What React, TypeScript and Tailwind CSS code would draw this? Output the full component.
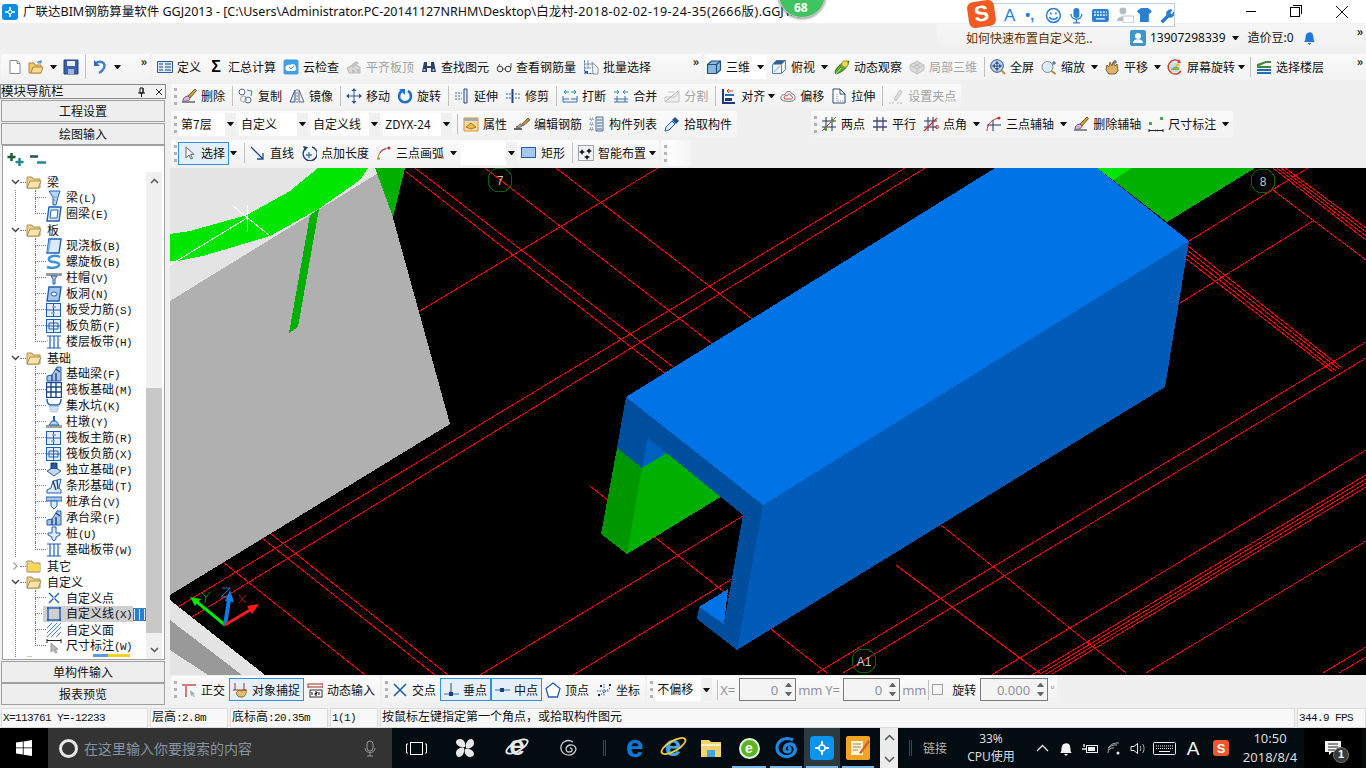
import React from 'react';
import clsx from 'clsx';

const Ic = ({ children, w = 16, h = 16 }: { children: React.ReactNode; w?: number; h?: number }) => (
  <svg width={w} height={h} viewBox={`0 0 ${w} ${h}`} className="shrink-0 block" fill="none">
    {children}
  </svg>
);

const B = '#1f5fb4';
const L = '#bcd6f5';

const icons: Record<string, React.ReactNode> = {
  new: <Ic><path d="M3 1.5h7l3 3v10H3z" fill="#fff" stroke="#8a8a8a" /><path d="M10 1.5v3h3" stroke="#8a8a8a" fill="#e6e6e6" /></Ic>,
  open: <Ic><path d="M1 4h5l1 2h6v8H1z" fill="#f0c868" stroke="#b08a3a" /><path d="M3 14l2-6h10l-2 6z" fill="#f7dc96" stroke="#b08a3a" /><path d="M9 4c1-2 3-2 4-1M13 1v3h-3" stroke="#3f7fc0" /></Ic>,
  save: <Ic><path d="M1 1h14v14H1z" fill="#3d5fa8" stroke="#26407c" /><path d="M4 2h8v5H4z" fill="#e8eef8" /><path d="M5 10h6v5H5z" fill="#9fb6dc" /></Ic>,
  undo: <Ic><path d="M4 4c5-3 10 0 8 5-1 2-3 4-5 5" stroke="#3a7fd0" strokeWidth="2.4" /><path d="M2 1v6h6z" fill="#2a6cc0" /></Ic>,
  define: <Ic><path d="M.5 2.5h15v11H.5z" fill="#dbe8f8" stroke="#2c5a9c" /><path d="M2 5h4M2 8h4M2 11h4M8 5h6M8 8h6M8 11h6" stroke="#24466f" /></Ic>,
  sum: <span className="w-4 text-center font-bold text-[16px] leading-4 text-black font-['Liberation_Sans',sans-serif]">Σ</span>,
  cloud: <Ic><rect x=".5" y=".5" width="15" height="15" rx="2" fill="#3fa0e4" /><path d="M3 11c-2-3 1-6 4-5 2-2 6-1 6 3 1 2-1 3-2 3H4z" fill="#fff" /><path d="M6 8l2 2 3-3" stroke="#2a80c8" /></Ic>,
  flush: <Ic><path d="M1 9l7-4 6 3v6H3z" fill="#d8d8d8" stroke="#bbb" /><path d="M4 7l6-5 3 2-6 5zM6 11h3v3H6zM11 10h2v4h-2z" fill="#bfbfbf" /></Ic>,
  find: <Ic><path d="M3 3h3v4h4V3h3l2 10H10V9H6v4H1z" fill="#2d3f63" /><path d="M2.500 11h2M11.500 11h2" stroke="#9fc0e8" strokeWidth="2" /></Ic>,
  glass: <Ic><circle cx="4" cy="10" r="2.800" stroke="#333" /><circle cx="12" cy="10" r="2.800" stroke="#333" /><path d="M7 10h2M1 9l3-4M15 9V4" stroke="#555" /></Ic>,
  batch: <Ic><path d="M1.500 1.500v13h9" stroke={B} strokeDasharray="2 1" /><path d="M1 5h10M1 9h7M5 1v8M9 3l6 6v6h-5z" stroke="#8896a8" /><path d="M2 12h3v2H2z" fill={B} /></Ic>,
  cube: <Ic><path d="M1.500 5.500l4-3.500h9v9l-4 3.500h-9z" fill="#8bb9e4" stroke="#1f4f7f" strokeWidth="1.200" /><path d="M1.500 5.500h9v9M10.500 5.500l4-3.500" stroke="#1f4f7f" strokeWidth="1.200" /></Ic>,
  top: <Ic><path d="M1.500 5.500l4-4h9v9l-4 4h-9z" fill="#eef5fb" stroke="#5a85ad" /><path d="M1.500 5.500l4-4h9l-4 4z" fill="#2f6394" /><path d="M10.500 5.500v9" stroke="#5a85ad" /><path d="M3 13l6-6" stroke="#b9d2e8" strokeWidth="2" /></Ic>,
  orbit: <Ic><path d="M1 13C3 7 9 2 15 2c-1 6-6 11-13 13z" fill="#5ba62f" stroke="#35761a" /><circle cx="11" cy="5" r="3.200" fill="#f0dc50" stroke="#a89624" /><path d="M2 15l5-6" stroke="#bde29a" /></Ic>,
  local: <Ic><path d="M1 6l7-4 7 4v5l-7 4-7-4z" fill="#dcdcdc" stroke="#c0c0c0" /><path d="M1 6l7 4 7-4M8 10v5M4.500 4l7 4M11.500 4l-7 4" stroke="#bdbdbd" /></Ic>,
  full: <Ic><circle cx="7" cy="7" r="6.300" fill="#bcd3ee" stroke="#27528a" /><path d="M7 3v8M3 7h8M7 2.500l-1.500 2h3zM7 11.500l-1.500-2h3zM2.500 7l2-1.500v3zM11.500 7l-2-1.500v3z" stroke="#1d3f72" strokeWidth=".8" /><path d="M11 11l4 4" stroke="#c09030" strokeWidth="2" /></Ic>,
  zoom: <Ic><circle cx="6.500" cy="8" r="5.500" fill="#dbe8f5" stroke="#7c8ba0" /><path d="M10.500 12l4 3" stroke="#b88a30" strokeWidth="2" /><path d="M13 2v4M11 4h4" stroke="#33507e" /><path d="M3.500 7c0-2 2-3 3-3" stroke="#fff" /></Ic>,
  pan: <Ic><path d="M2 11l1-5 2 2 1-5 2 4 1-4 2 4 2-2 1 7-3 3H5z" fill="#d9b06c" stroke="#86622a" /><path d="M11 1v4M9 3h4" stroke="#33507e" /></Ic>,
  rotate: <Ic><rect x="3" y="4" width="10" height="9" fill="#c4e0f2" /><path d="M4 11h8v-2l-3-2-5 3z" fill="#7bb840" /><path d="M9 5h3v2H9z" fill="#f0c040" /><path d="M14 12A7 7 0 1 1 12.500 2.500" stroke="#d4402c" strokeWidth="1.500" /><path d="M12 0l2 4-4 0z" fill="#d4402c" /></Ic>,
  floors: <Ic><path d="M1 5l9-3h5v2H10L3 7h12v2H1z" fill="#3e8a3e" /><path d="M1 10h14v2H1zM1 13h14v2H1z" fill="#1f6fb4" /></Ic>,
  erase: <Ic><path d="M1 14h13" stroke="#222" /><path d="M2 13c0-3 2-5 5-5l2 2c0 2-3 4-7 3z" fill="#d9b2d8" stroke="#7a5a96" /><path d="M7 8l7-7 1.500 1.500-6.500 7.500z" fill="#c9a040" stroke="#7c5c16" /></Ic>,
  copy: <Ic><circle cx="4" cy="4" r="3" stroke="#5a6a80" /><circle cx="10" cy="12" r="3" stroke="#5a6a80" /><circle cx="5.500" cy="11" r="3" stroke="#9aa8b8" /><path d="M9 2l5 1-1 5" stroke="#3f7fc0" /></Ic>,
  mirror: <Ic><path d="M6 2L1 14h5z" stroke="#2a5a96" fill="#dbe8f8" /><path d="M10 2l5 12h-5z" stroke="#5a6a80" fill="#eef2f7" /><path d="M8 1v14" stroke="#777" strokeDasharray="2 1" /></Ic>,
  move: <Ic><path d="M8 1v14M1 8h14" stroke="#2a5a96" /><path d="M8 0l-2.500 3h5zM8 16l-2.500-3h5zM0 8l3-2.500v5zM16 8l-3-2.500v5z" fill="#2a5a96" /></Ic>,
  turn: <Ic><path d="M11 3a6 6 0 1 1-6 0" stroke="#1f6fc8" strokeWidth="2.600" /><path d="M2 1h6v6z" fill="#1f6fc8" /></Ic>,
  extend: <Ic><path d="M1 5h7M1 8h6M1 11h7" stroke="#3a6fb0" strokeDasharray="2 1" /><path d="M10 1h3v14h-3z" stroke="#22467c" fill="#e6eef8" /></Ic>,
  trim: <Ic><path d="M1 6h6M1 10h6M10 6h5M10 10h5" stroke="#3a6fb0" strokeDasharray="2 1" /><path d="M7.500 1v14" stroke="#22467c" strokeWidth="2" /></Ic>,
  breakline: <Ic><path d="M1 11h6M9 11h6M1 14h14M1 8v6M15 8v6" stroke="#3a6fb0" /><path d="M2 4h5M14 4H9M2 4l2-2M2 4l2 2M14 4l-2-2M14 4l-2 2" stroke="#2d84c8" /></Ic>,
  merge: <Ic><path d="M1 11h14M1 14h14M4 8v6M12 8v6" stroke="#3a6fb0" /><path d="M1 4h5M15 4h-5M6 4L4 2M6 4L4 6M10 4l2-2M10 4l2 2" stroke="#2d84c8" /></Ic>,
  split: <Ic><path d="M1 9h10l4-5v10H1z" stroke="#c4c4c4" fill="#eee" /><path d="M2 13L14 3" stroke="#aaa" /><path d="M4 4h6" stroke="#ccc" /></Ic>,
  align: <Ic><path d="M2 1v14h12" stroke="#1c3a78" strokeWidth="2" /><path d="M4 6h9v2H4z" fill="#2b6cb4" /><path d="M6 3h6M6 3l2-2M6 3l2 2" stroke="#c0392b" /><path d="M4 10h7v3H4z" fill="#1c3a78" /></Ic>,
  offset: <Ic><path d="M1 11c-1-3 2-5 4-4 0-4 6-5 7-1 3 0 4 4 2 6-1 2-11 2-13-1z" fill="#eef2f7" stroke="#6d7c90" /><path d="M4 10c0-2 2-3 3-2 1-3 4-2 4 0 2 0 2 3 0 3H5z" stroke="#d44a3a" /></Ic>,
  stretch: <Ic><path d="M2 1h7l5 5v9H2z" fill="#fff" stroke="#2a4a7c" /><path d="M9 1v5h5" stroke="#2a4a7c" /><path d="M6 6v7h6" stroke="#888" strokeDasharray="1 1" /></Ic>,
  grip: <Ic><path d="M1 15h5M9 15h5" stroke="#bbb" strokeDasharray="2 1" /><path d="M6 11l6-9 2 2-6 9z" fill="#ddd" stroke="#c0c0c0" /></Ic>,
  props: <Ic><path d="M1 2h14v13H1z" fill="#f8dca8" stroke="#e09030" /><path d="M1 2h14v3H1z" fill="#a8a8a8" /><path d="M3 11l5-4 5 4-5 2z" fill="#e8b848" stroke="#a87820" /></Ic>,
  edit: <Ic><path d="M0 13h8" stroke="#222" strokeWidth="1.400" /><path d="M2 11c2 0 3-3 5-3l1 2c-1 1-3 2-6 1z" fill="#c8a0b8" stroke="#665" /><path d="M8 8l6-6 2 2-7 6z" fill="#c88a3c" stroke="#764" /></Ic>,
  list: <Ic><path d="M7 1h7v14H7z" fill="#e4ecf6" stroke="#4a6a94" /><path d="M8 4h5M8 7h5M8 10h5M8 13h5" stroke="#4a6a94" /><path d="M1 2h3v2H1zM1 7h3v2H1zM1 12h3v2H1z" stroke="#4a6a94" strokeDasharray="1 1" /></Ic>,
  pick: <Ic><path d="M1 15l1-4 6-6 3 3-6 6z" fill="#dcecfa" stroke="#1f5fb4" /><path d="M8 4l3-3 4 4-3 3z" fill="#1c4f94" /></Ic>,
  two: <Ic><path d="M1 5h14M1 11h14M5 1v14M11 1v14" stroke="#20355f" /><path d="M1 15L15 1" stroke="#d4282c" /><rect x="3" y="11" width="3" height="3" fill="#4a9a30" /><rect x="10" y="3" width="3" height="3" fill="#4a9a30" /></Ic>,
  par: <Ic><path d="M1 5h14M1 11h14M5 1v14M11 1v14" stroke="#48497c" strokeWidth="1.300" /></Ic>,
  ang: <Ic><path d="M1 5h13M1 11h13M5 1v14M10 1v14" stroke="#20355f" /><path d="M1 15L14 2" stroke="#d4282c" strokeWidth="1.300" /><circle cx="14" cy="11" r="1.500" stroke="#d4282c" /></Ic>,
  arcaxis: <Ic><path d="M1 9h14M7 4v11" stroke="#20355f" /><path d="M1 15c0-8 6-12 12-13" stroke="#d4282c" /><circle cx="13" cy="2" r="1.500" fill="#d4282c" /></Ic>,
  dim: <Ic><path d="M1 13v3M15 13v3M1 14.500h14" stroke="#222" /><rect x="1" y="6" width="3" height="3" fill="#4aaa50" /><rect x="12" y="1" width="3" height="3" fill="#4aaa50" /><path d="M6 14.500l2-1v2zM11 14.500l-2-1v2z" fill="#222" /></Ic>,
  cursor: <Ic><path d="M5 2v11l3-3 2 4 1.500-.7-2-4h3.500z" fill="#fff" stroke="#666" /></Ic>,
  line: <Ic><path d="M1 2l12 12M13 8v6H7" stroke="#1f4f86" strokeWidth="1.300" /></Ic>,
  plus: <Ic><path d="M4 4a7 7 0 1 0 7-2" stroke="#20456f" strokeWidth="1.400" /><path d="M2 1l5 1-3 4z" fill="#20456f" /><path d="M8 7v6M5 10h6" stroke="#2a7ac0" strokeWidth="1.300" /></Ic>,
  arc: <Ic><path d="M2 14c0-6 5-11 11-11" stroke="#5a88b8" /><path d="M4 8c1-2 3-4 6-4" stroke="#c83a30" strokeWidth="1.200" /><circle cx="2.500" cy="13.500" r="1.500" fill="#e09020" /><circle cx="13" cy="3" r="1.500" fill="#d4282c" /></Ic>,
  rect: <Ic><rect x=".5" y="2.500" width="14" height="10" fill="#a8c6f0" stroke="#1f5fb4" /></Ic>,
  smart: <Ic><rect x=".5" y=".5" width="15" height="15" fill="#eef2f7" stroke="#555" strokeDasharray="1 1" /><path d="M4 4l1 2 2 1-2 1-1 2-1-2-2-1 2-1zM11 3l1 2 2 1-2 1-1 2-1-2-2-1 2-1zM9 10l1 1 2 1-2 1-1 2-1-2-2-1 2-1z" fill="#111" /></Ic>,
  ortho: <Ic><path d="M1 2h14v2H1zM4 4v11h2V4z" fill="#d47a7a" /><path d="M9 8l5 4-2 .5 2 2-1 .5-2-2-1 1z" fill="#9ab" /></Ic>,
  snap: <Ic><path d="M3 1v7M12 1v7M1 8h14" stroke="#a03020" /><path d="M5 13c-2-2 1-6 4-4l5-1c1 3-1 7-4 7-2 0-4 0-5-2z" fill="#e0c070" stroke="#8a6a20" /></Ic>,
  dyn: <Ic><path d="M1 2h15M1 5h15M1 2v4M16 2v4" stroke="#a03020" /><rect x="3" y="8" width="12" height="7" fill="#fff" stroke="#333" /><path d="M5 10v3M8 10h2v1.500H8V13h2M12 10v3" stroke="#111" /></Ic>,
  cross: <Ic><path d="M2 2l12 12M14 2L2 14" stroke="#1f5fb4" strokeWidth="1.600" /></Ic>,
  perp: <Ic><path d="M1 12h15" stroke="#2a6fc0" /><path d="M8 1v11" stroke="#444" /><rect x="6" y="10" width="4" height="4" fill="#1c3f8c" /></Ic>,
  mid: <Ic><path d="M1 8h15" stroke="#6a90c0" strokeWidth="1.400" /><rect x="6" y="6" width="4" height="4" fill="#1c3f8c" /></Ic>,
  vertex: <Ic><path d="M8 1l7 5.500-2.500 8.500h-9L1 6.500z" fill="#fff" stroke="#1f5fb4" strokeWidth="1.300" /></Ic>,
  coord: <Ic><path d="M3 14l11-8M8 2v12M1 9h12" stroke="#1f5fb4" strokeDasharray="1.500 1" /><path d="M4 4h2M13 3h2M2 13h2" stroke="#222" strokeWidth="2" /></Ic>,
};

const tree: Record<string, React.ReactNode> = {
  beam: <Ic><path d="M3 1h11l-2 6-2 8H7V7z" fill={L} stroke={B} /><path d="M7 7l5 0M4 3l5 8" stroke="#6a9ad8" /></Ic>,
  ring: <Ic><path d="M3 1h12l-2 14H1z" fill="#dceafa" stroke={B} strokeWidth="1.400" /><path d="M5 4h7l-1 8H4z" fill="#fff" stroke={B} /></Ic>,
  slab: <Ic><path d="M3 1h12l-2 14H1z" fill="#dceafa" stroke={B} strokeWidth="1.400" /><path d="M2 14l2-12" stroke="#7fb0e8" strokeWidth="2" /></Ic>,
  spiral: <Ic><path d="M14 3C8 0 2 3 3 6s9 1 10 4-6 5-12 3" stroke="#3f8fe0" strokeWidth="2.400" /></Ic>,
  cap: <Ic><path d="M0 3h16v3H0z" fill="#9a9a9a" /><path d="M5 6h6l-2 3v5H7V9z" fill={L} stroke={B} /></Ic>,
  hole: <Ic><path d="M3 1h12l-2 14H1z" fill="#a8c8f0" stroke={B} strokeWidth="1.400" /><ellipse cx="8" cy="8" rx="3" ry="2" fill="#fff" stroke={B} /></Ic>,
  force: <Ic><rect x=".5" y="1.500" width="14" height="13" fill="#e4eefa" stroke={B} /><path d="M7.500 2v12M1 8h13" stroke={B} /><path d="M6 5h4M5 11h4" stroke="#7fa8dc" strokeWidth="1.500" /></Ic>,
  neg: <Ic><rect x=".5" y="1.500" width="14" height="13" fill="#e4eefa" stroke={B} /><path d="M7.500 2v12M1 8h13M3 5h9v6H3z" stroke={B} /></Ic>,
  band: <Ic><path d="M1 2h14M1 14h14M4 2v12M8 2v12M12 2v12" stroke={B} strokeWidth="1.200" /><path d="M1 6h14" stroke="#88aad8" strokeDasharray="1 1" /></Ic>,
  fbeam: <Ic><path d="M1 15V10l5-1 5-8h4v14z" fill="#a8c4e8" stroke={B} /><path d="M6 9v6M10 3l4 3M10 15V7" stroke="#1c4580" strokeWidth="1.400" /></Ic>,
  raft: <Ic><rect x=".5" y=".5" width="15" height="15" fill="#fff" stroke="#1c4580" strokeWidth="1.400" /><path d="M1 5h14M1 10h14M5 1v14M10 1v14" stroke="#1c4580" strokeWidth="1.400" /></Ic>,
  sump: <Ic><path d="M1 1c0 4 2 6 4 6h6c2 0 4-2 4-6" stroke={B} strokeWidth="1.400" /><path d="M3 8h10l-2 6H5z" fill="#cfdeef" stroke="#7fa8dc" strokeDasharray="1 1" /></Ic>,
  pier: <Ic><path d="M0 11h16v3H0z" fill="#a0a0a0" /><path d="M3 11l3-4h4l3 4z" fill={L} stroke={B} /><path d="M7 2h2v5H7z" fill={B} /></Ic>,
  iso: <Ic><path d="M1 9l7-4 7 4-7 5z" fill="#c4d8f0" stroke={B} /><path d="M5 7V1h6v6" fill="#2a5a96" stroke="#163a70" /></Ic>,
  strip: <Ic><path d="M1 15v-3l4-2 2-7 8-2-2 9 2 2v3z" fill="#dceafa" stroke={B} /><path d="M7 3l3 9M11 2l1 9" stroke="#1c4580" strokeWidth="1.400" /></Ic>,
  cap2: <Ic><path d="M0 3h16v4H0z" fill="#a8c4e8" stroke={B} /><path d="M5 7h6v5l-3 3-3-3z" fill="#dceafa" stroke={B} /></Ic>,
  pile: <Ic><path d="M6 1h4v6h4v2l-4 2v2l-2 2-2-2v-2L2 9V7h4z" fill="#dceafa" stroke={B} /></Ic>,
  point: <Ic><path d="M3 3l10 10M13 3L3 13" stroke={B} strokeWidth="1.400" /><circle cx="8" cy="8" r="1.500" fill="#8ab4e8" /></Ic>,
  cline: <Ic><rect x="2" y="2" width="12" height="12" stroke={B} strokeWidth="1.400" /><path d="M1 1h2v2H1zM13 1h2v2h-2zM1 13h2v2H1zM13 13h2v2h-2z" fill={B} /></Ic>,
  face: <Ic><path d="M1 6l5-5M1 11L11 1M1 15L15 1M5 15L15 5M10 15l5-5" stroke="#4a86d0" /></Ic>,
  dimt: <Ic><path d="M1 1v4M15 1v4M1 2.500h14" stroke="#222" /><path d="M5 5v9l2.500-2 2 3 1.500-.8-2-3h3z" fill="#b8b8b8" stroke="#999" /></Ic>,
};

const Caret = ({ className }: { className?: string }) => (
  <span className={clsx('w-[7px] h-1 shrink-0 block border-t-4 border-x-[3.500px] border-x-transparent border-t-[#111]', className)} />
);

const Chevrons = ({ className }: { className?: string }) => (
  <span className={clsx('font-bold text-[12px] leading-3 text-[#111] self-start', className)}>»</span>
);

const Sep = ({ className }: { className?: string }) => (
  <span className={clsx('w-px h-[20px] bg-[#c0c0c0] shrink-0 mr-[-2px]', className)} />
);

const Gripper = () => <span className="w-[3px] h-[17px] mr-[-3px] shrink-0 border-l-[3px] border-dotted border-[#b4b4b4]" />;

type ToolProps = { icon: string; label: string; gray?: boolean; caret?: boolean; tight?: boolean; className?: string };

const Tool = ({ icon, label, gray, caret, tight, className }: ToolProps) => (
  <div className={clsx('flex items-center shrink-0', gray && 'text-[#a3a3a3]', className)}>
    {icons[icon]}
    <span className="ml-1 whitespace-nowrap">{label}</span>
    {caret && <Caret className="ml-[6px] mr-[-1px]" />}
    {tight && <Caret className="ml-[3px] mr-[-2px]" />}
  </div>
);

const ActiveTool = ({ icon, label, className }: { icon: string; label: string; className?: string }) => (
  <div className={clsx('flex items-center h-[23px] pl-[2px] pr-[3px] border border-[#2f8fe0] bg-[#e4eff9] shrink-0', className)}>
    {icons[icon]}
    <span className="ml-1 whitespace-nowrap">{label}</span>
  </div>
);

const Bar = ({ children, className }: { children: React.ReactNode; className?: string }) => (
  <div className={clsx('flex items-center gap-[7px] rounded-[2px] bg-linear-to-b from-[#fbfbfb] to-[#f2f2f2]', className)}>{children}</div>
);

const Combo = ({ label, className }: { label?: string; className?: string }) => (
  <div className={clsx('flex h-[23px] bg-white shrink-0', className)}>
    <span className="flex-1 pl-[2px] leading-[22px] whitespace-nowrap">{label}</span>
    <span className="w-[11px] bg-[#f0f0f0] flex items-center justify-center">
      <Caret />
    </span>
  </div>
);

const Spin = ({ value, className }: { value: string; className?: string }) => (
  <div className={clsx('flex h-[23px] border border-[#7a7a7a] bg-[#f4f4f4] items-center shrink-0', className)}>
    <span className="flex-1 text-right text-[#8d939b] text-[13px] pr-[3px] font-['Noto_Sans',sans-serif]">{value}</span>
    <span className="w-[14px] h-full flex flex-col items-center justify-center gap-[5px]">
      <span className="w-[7px] h-1 border-b-4 border-x-[3.500px] border-x-transparent border-b-[#666]" />
      <span className="w-[7px] h-1 border-t-4 border-x-[3.500px] border-x-transparent border-t-[#666]" />
    </span>
  </div>
);

const TitleBar = () => (
  <div className="relative h-[23px] bg-white flex items-center shrink-0">
    <div className="ml-[2px] w-4 h-4 rounded-[3px] bg-[#0c8ee6] flex items-center justify-center">
      <svg width="12" height="12" viewBox="0 0 12 12" fill="none">
        <path d="M6 1v10M1 6h10" stroke="#fff" strokeWidth="1.600" />
        <circle cx="6" cy="6" r="2" fill="#0c8ee6" stroke="#fff" />
      </svg>
    </div>
    <span className="ml-[5px] whitespace-nowrap text-[12.500px] text-[#111] font-['Noto_Sans','Noto_Sans_CJK_SC',sans-serif]">
      广联达BIM钢筋算量软件 GGJ2013 - [C:\Users\Administrator.PC-20141127NRHM\Desktop\白龙村
      <span className="tracking-[.45px]">-2018-02-02-19-24-35(2666版)</span>.GGJ12]
    </span>
    <div className="absolute left-[778px] top-[-30px] w-[48px] h-[48px] rounded-full bg-[#3fc45f] border border-[#c8c8c8] shadow-[0_1px_3px_rgba(0,0,0,.45)]" />
    <span className="absolute left-[794px] top-0 text-white text-[12px] font-bold leading-[15px] font-['Noto_Sans',sans-serif]">68</span>
    <div className="absolute left-[990px] top-[3px] w-[185px] h-[24px] bg-white border border-[#b9cfe2] z-10 flex items-center text-[#2a7fd0]">
      <span className="ml-[13px] font-['Liberation_Sans',sans-serif] text-[17px] leading-none">A</span>
      <span className="ml-[10px] font-bold text-[14px] leading-none font-['Liberation_Sans',sans-serif]">•,</span>
      <svg className="ml-[11px]" width="17" height="17" viewBox="0 0 17 17" fill="none">
        <circle cx="8.500" cy="8.500" r="7" stroke="#2a7fd0" strokeWidth="1.600" />
        <path d="M6 5.500v2M11 5.500v2" stroke="#2a7fd0" strokeWidth="1.600" />
        <path d="M4.500 10c1 3 7 3 8 0" stroke="#2a7fd0" strokeWidth="1.500" />
      </svg>
      <svg className="ml-[7px]" width="15" height="17" viewBox="0 0 15 17" fill="none">
        <rect x="4.500" y="1" width="6" height="10" rx="3" fill="#2a7fd0" />
        <path d="M2 7c0 7 11 7 11 0M7.500 12v4M4 16h7" stroke="#2a7fd0" strokeWidth="1.400" />
      </svg>
      <svg className="ml-[8px]" width="17" height="13" viewBox="0 0 17 13">
        <rect width="17" height="13" rx="2" fill="#2a7fd0" />
        <path d="M2 3h2M5 3h2M8 3h2M11 3h2M14 3h1M2 6h2M5 6h2M8 6h2M11 6h2M14 6h1M4 10h9" stroke="#fff" strokeWidth="1.300" />
      </svg>
      <svg className="ml-[8px]" width="18" height="16" viewBox="0 0 18 16">
        <circle cx="6" cy="4" r="3.500" fill="#b4bcc6" />
        <path d="M0 14c0-6 12-6 12 0z" fill="#b4bcc6" />
        <rect x="6" y="9" width="11" height="7" rx="1" fill="#fff" stroke="#b4bcc6" />
      </svg>
      <svg className="ml-[3px]" width="15" height="14" viewBox="0 0 15 14">
        <path d="M4 0h7l4 3-2 3-1-1v9H3V5L2 6 0 3z" fill="#2a7fd0" />
      </svg>
      <svg className="ml-[7px]" width="15" height="15" viewBox="0 0 15 15" fill="none">
        <path d="M2 13l6-6c-1-3 1-6 5-5l-2 3 2 2 2-3c1 4-2 6-5 5l-6 6z" fill="#2a7fd0" stroke="#2a7fd0" />
      </svg>
    </div>
    <div className="absolute left-[968px] top-[1px] w-[27px] h-[26px] z-20 rounded-[6px] bg-[#f25a24] rotate-[-8deg] flex items-center justify-center text-white font-bold text-[22px] leading-none font-['Liberation_Sans',sans-serif]">
      S
    </div>
    <div className="ml-auto flex items-center">
      <span className="w-[10px] h-px bg-black" />
      <span className="ml-[34px] w-[10px] h-[10px] border border-black relative">
        <span className="absolute left-[2px] top-[-3px] w-[9px] h-[9px] border-t border-r border-black" />
      </span>
      <svg className="ml-[35px] mr-[17px]" width="14" height="14" viewBox="0 0 14 14">
        <path d="M1 1l12 12M13 1L1 13" stroke="#111" />
      </svg>
    </div>
  </div>
);

const InfoRow = () => (
  <div className="h-[31px] flex justify-end shrink-0">
    <div className="w-[429px] h-[27px] mt-[1px] rounded-tl-[3px] bg-linear-to-b from-[#f6f6f6] to-[#f0f0f0] flex items-center">
      <span className="ml-[29px] w-[164px] text-[#5c3200]">如何快速布置自定义范..</span>
      <svg width="16" height="16" viewBox="0 0 16 16">
        <rect width="16" height="16" rx="2" fill="#3d95c9" />
        <circle cx="8" cy="6" r="3" fill="#fff" />
        <path d="M3 13c0-5 10-5 10 0z" fill="#fff" />
      </svg>
      <span className="ml-1 font-['Noto_Sans',sans-serif] whitespace-nowrap">13907298339</span>
      <Caret className="ml-[6px]" />
      <span className="ml-[9px] whitespace-nowrap font-['Noto_Sans','Noto_Sans_CJK_SC',sans-serif]">造价豆:0</span>
      <svg className="ml-[9px]" width="13" height="16" viewBox="0 0 13 16">
        <path d="M1 12c2-2 1-4 2-7s6-4 7 0 0 5 2 7z" fill="#1f78d8" />
        <path d="M4.500 13h4l-2 2z" fill="#1f78d8" />
      </svg>
      <Chevrons className="ml-auto mr-[3px] mt-[1px]" />
    </div>
  </div>
);

const ToolRow1 = () => (
  <div className="h-[30px] flex pb-[4px] shrink-0">
    <Bar className="ml-[1px] w-[149px] !gap-[6px] pl-[6px]">
      {icons.new}
      <span className="ml-[-1px]">{icons.open}</span>
      <Caret />
      {icons.save}
      <span className="w-px h-[24px] bg-[#c0c0c0]" />
      {icons.undo}
      <Caret />
      <Chevrons className="ml-auto mr-[3px] mt-[1px]" />
    </Bar>
    <Bar className="ml-[2px] w-[550px] pl-[5px]">
      <Tool icon="define" label="定义" />
      <Tool icon="sum" label="汇总计算" />
      <Tool icon="cloud" label="云检查" />
      <Tool icon="flush" label="平齐板顶" gray />
      <Tool icon="find" label="查找图元" />
      <Tool icon="glass" label="查看钢筋量" />
      <Tool icon="batch" label="批量选择" />
      <Chevrons className="ml-auto mr-[3px] mt-[1px]" />
    </Bar>
    <Bar className="ml-[2px] flex-1 pl-[2px]">
      <div className="relative flex items-center h-[24px] w-[61px] bg-white ml-[-1px] pl-[1px] shrink-0">
        <Tool icon="cube" label="三维" />
        <Caret className="ml-[7px]" />
      </div>
      <Tool icon="top" label="俯视" caret className="ml-[-2px]" />
      <Tool icon="orbit" label="动态观察" />
      <Tool icon="local" label="局部三维" gray />
      <Sep />
      <Tool icon="full" label="全屏" />
      <Tool icon="zoom" label="缩放" caret />
      <Tool icon="pan" label="平移" caret />
      <Tool icon="rotate" label="屏幕旋转" tight />
      <Sep />
      <Tool icon="floors" label="选择楼层" />
      <Chevrons className="ml-auto mr-[3px] mt-[1px]" />
    </Bar>
  </div>
);

const ToolRow2 = () => (
  <div className="h-[27px] flex pb-[3px] shrink-0">
    <Bar className="ml-[1px] pl-[3px] pr-[5px]">
      <Gripper />
      <Tool icon="erase" label="删除" />
      <Sep />
      <Tool icon="copy" label="复制" />
      <Tool icon="mirror" label="镜像" />
      <Sep />
      <Tool icon="move" label="移动" />
      <Tool icon="turn" label="旋转" />
      <Sep />
      <Tool icon="extend" label="延伸" />
      <Tool icon="trim" label="修剪" />
      <Sep />
      <Tool icon="breakline" label="打断" />
      <Tool icon="merge" label="合并" />
      <Tool icon="split" label="分割" gray />
      <Sep />
      <Tool icon="align" label="对齐" tight />
      <Tool icon="offset" label="偏移" />
      <Tool icon="stretch" label="拉伸" />
      <Sep />
      <Tool icon="grip" label="设置夹点" gray />
    </Bar>
  </div>
);

const ToolRow3 = () => (
  <div className="h-[28px] flex pb-[2px] shrink-0">
    <Bar className="ml-[1px] pl-[3px] pr-[5px]">
      <Gripper />
      <div className="flex gap-[3px] ml-[-2px]">
        <Combo label="第7层" className="w-[57px]" />
        <Combo label="自定义" className="w-[69px]" />
        <Combo label="自定义线" className="w-[69px]" />
        <Combo label="ZDYX-24" className="w-[69px]" />
      </div>
      <Sep className="ml-[-2px]" />
      <Tool icon="props" label="属性" />
      <Tool icon="edit" label="编辑钢筋" />
      <Tool icon="list" label="构件列表" />
      <Tool icon="pick" label="拾取构件" />
    </Bar>
    <Bar className="ml-[74px] pl-[3px] pr-[5px]">
      <Gripper />
      <Tool icon="two" label="两点" />
      <Tool icon="par" label="平行" />
      <Tool icon="ang" label="点角" caret />
      <Tool icon="arcaxis" label="三点辅轴" caret />
      <Tool icon="erase" label="删除辅轴" />
      <Tool icon="dim" label="尺寸标注" caret />
    </Bar>
  </div>
);

const ToolRow4 = () => (
  <div className="h-[29px] flex py-[1px] pb-[2px] shrink-0">
    <Bar className="ml-[1px] pl-[3px] pr-[5px]">
      <Gripper />
      <ActiveTool icon="cursor" label="选择" className="ml-[-3px]" />
      <Caret className="ml-[-6px]" />
      <Sep />
      <Tool icon="line" label="直线" />
      <Tool icon="plus" label="点加长度" />
      <Tool icon="arc" label="三点画弧" caret />
      <Combo className="w-[56px] ml-[-2px]" />
      <Tool icon="rect" label="矩形" className="ml-[-3px]" />
      <Sep />
      <Tool icon="smart" label="智能布置" tight />
    </Bar>
    <Bar className="ml-[2px] w-[30px] pl-[3px] !gap-0">
      <Gripper />
      <span className="ml-[4px] w-[23px] h-full bg-linear-to-r from-white to-[#f4f4f4]" />
    </Bar>
  </div>
);

const ToolBottom = () => (
  <div className="h-[31px] flex pt-[1px] pb-[3px] shrink-0">
    <Bar className="ml-[1px] pl-[3px] pr-[5px]">
      <Gripper />
      <Tool icon="ortho" label="正交" />
      <ActiveTool icon="snap" label="对象捕捉" className="ml-[-3px]" />
      <Tool icon="dyn" label="动态输入" className="ml-[-4px]" />
    </Bar>
    <Bar className="ml-[2px] pl-[3px] pr-[5px]">
      <Gripper />
      <Tool icon="cross" label="交点" />
      <ActiveTool icon="perp" label="垂点" className="ml-[-3px]" />
      <ActiveTool icon="mid" label="中点" className="ml-[-7px]" />
      <Tool icon="vertex" label="顶点" className="ml-[-4px]" />
      <Tool icon="coord" label="坐标" />
    </Bar>
    <Bar className="ml-[2px] pl-[3px] w-[410px] !gap-0 text-[#111]">
      <Gripper />
      <Combo label="不偏移" className="w-[57px] ml-[5px]" />
      <Sep className="ml-[5px] !mr-0" />
      <span className="ml-[2px] w-[17px] text-[#8d939b] font-['Noto_Sans',sans-serif] text-[13px]">X=</span>
      <Spin value="0" className="ml-[2px] w-[57px]" />
      <span className="ml-[2px] w-[24px] text-[#8d939b] font-['Noto_Sans',sans-serif] text-[13px]">mm</span>
      <span className="ml-[3px] w-[17px] text-[#8d939b] font-['Noto_Sans',sans-serif] text-[13px]">Y=</span>
      <Spin value="0" className="ml-[1px] w-[57px]" />
      <span className="ml-[2px] w-[24px] text-[#8d939b] font-['Noto_Sans',sans-serif] text-[13px]">mm</span>
      <Sep className="ml-[2px] !mr-0" />
      <span className="ml-[3px] w-[11px] h-[11px] border border-[#a0a0a0] bg-[#f6f6f6]" />
      <span className="ml-[9px]">旋转</span>
      <Spin value="0.000" className="ml-[4px] w-[68px]" />
      <span className="ml-[2px] text-[#8d939b] text-[12px]">°</span>
    </Bar>
  </div>
);

const Label = ({ text, k }: { text: string; k?: string }) => (
  <span className="whitespace-nowrap text-[#111]">
    {text}
    {k && <span className="text-[11px] tracking-[-.6px] font-['Liberation_Mono',monospace]">({k})</span>}
  </span>
);

const Folder = ({ open }: { open?: boolean }) => (
  <svg width="16" height="14" viewBox="0 0 16 14" className="shrink-0" fill="none">
    <path d="M1 2h5l1 2h7v9H1z" fill="#f2d27e" stroke="#a89058" />
    {open ? <path d="M1 13l3-7h11l-3 7z" fill="#fbe7ab" stroke="#a89058" /> : <path d="M2 6h12v6H2z" fill="#f8d850" />}
  </svg>
);

const Group = ({ label, open = true }: { label: string; open?: boolean }) => (
  <div className="flex items-center h-4">
    <span className="ml-[8px] w-[9px] h-[16px] flex items-center justify-center bg-white relative">
      <svg width="9" height="6" viewBox="0 0 9 6" fill="none" className={clsx(!open && '-rotate-90')}>
        <path d="M1 1l3.500 3.500L8 1" stroke={open ? '#444' : '#a8a8a8'} strokeWidth="1.500" />
      </svg>
    </span>
    <span className="w-[6px] border-b border-dotted border-[#777]" />
    <Folder open={open} />
    <span className="ml-[5px] text-[#111]">{label}</span>
  </div>
);

type ChildProps = { icon: string; text: string; k?: string; last?: boolean; selected?: boolean };

const Child = ({ icon, text, k, last, selected }: ChildProps) => (
  <div className="flex h-4 items-center">
    <div className="ml-[32px] w-[11px] h-4 shrink-0">
      <div className="h-2 border-l border-b border-dotted border-[#777]" />
      {!last && <div className="h-2 border-l border-dotted border-[#777]" />}
    </div>
    <div className={clsx('flex items-center h-4 ml-[-3px] pl-[3px] pr-[1px]', selected && 'bg-[#cfcfcf]')}>
      {tree[icon]}
      <span className="ml-1 inline-flex">
        <Label text={text} k={k} />
      </span>
    </div>
    {selected && (
      <span className="w-[13px] h-[13px] border border-[#2a7fd0] bg-[#d8e8f8] flex justify-center gap-px shrink-0">
        <span className="w-1 bg-[#2a7fd0]" />
        <span className="w-1 bg-[#2a7fd0]" />
      </span>
    )}
  </div>
);

const NavButton = ({ label, className }: { label: string; className?: string }) => (
  <div className={clsx('h-[22px] flex items-center justify-center border border-[#a0a0a0] bg-[#eeeeee] ml-[1px] w-[164px] text-[#111]', className)}>{label}</div>
);

const Sidebar = () => (
  <div className="w-[170px] shrink-0 flex flex-col">
    <div className="w-[166px] h-[15px] border border-[#8a8a8a] flex items-center text-[12.500px] leading-none text-[#111]">
      <span>模块导航栏</span>
      <svg className="ml-[73px]" width="9" height="10" viewBox="0 0 9 10" fill="none">
        <path d="M3 1h3v5H3zM1 6h7M4.500 6v4M6 1v5" stroke="#111" />
      </svg>
      <svg className="ml-[9px]" width="8" height="8" viewBox="0 0 8 8" fill="none">
        <path d="M1 1l6 6M7 1L1 7" stroke="#222" />
      </svg>
    </div>
    <NavButton label="工程设置" className="mt-[1px]" />
    <NavButton label="绘图输入" className="mt-[1px]" />
    <div className="ml-[2px] w-[163px] h-[515px] border border-[#a0a0a0] bg-white flex flex-col overflow-hidden">
      <div className="h-[26px] flex items-center pl-[4px] gap-[6px] shrink-0">
        <svg width="17" height="15" viewBox="0 0 17 15" fill="none">
          <path d="M4.500 1v8M.5 5h8" stroke="#1d5a3c" strokeWidth="2.500" />
          <path d="M12.500 6v8M8.500 10h8" stroke="#1f8a8a" strokeWidth="2.500" />
        </svg>
        <svg width="16" height="9" viewBox="0 0 16 9" fill="none">
          <path d="M0 1.500h8" stroke="#1d5a3c" strokeWidth="2.500" />
          <path d="M7 7.500h9" stroke="#1f8a8a" strokeWidth="2.500" />
        </svg>
      </div>
      <div className="flex flex-1 min-h-0">
        <div className="relative w-[143px] pt-[2px] overflow-hidden">
          <div className="absolute left-[12px] top-[12px] bottom-[2px] border-l border-dotted border-[#777]" />
          <div className="relative h-[483px] overflow-hidden">
            <Group label="梁" />
            <Child icon="beam" text="梁" k="L" />
            <Child icon="ring" text="圈梁" k="E" last />
            <Group label="板" />
            <Child icon="slab" text="现浇板" k="B" />
            <Child icon="spiral" text="螺旋板" k="B" />
            <Child icon="cap" text="柱帽" k="V" />
            <Child icon="hole" text="板洞" k="N" />
            <Child icon="force" text="板受力筋" k="S" />
            <Child icon="neg" text="板负筋" k="F" />
            <Child icon="band" text="楼层板带" k="H" last />
            <Group label="基础" />
            <Child icon="fbeam" text="基础梁" k="F" />
            <Child icon="raft" text="筏板基础" k="M" />
            <Child icon="sump" text="集水坑" k="K" />
            <Child icon="pier" text="柱墩" k="Y" />
            <Child icon="force" text="筏板主筋" k="R" />
            <Child icon="neg" text="筏板负筋" k="X" />
            <Child icon="iso" text="独立基础" k="P" />
            <Child icon="strip" text="条形基础" k="T" />
            <Child icon="cap2" text="桩承台" k="V" />
            <Child icon="fbeam" text="承台梁" k="F" />
            <Child icon="pile" text="桩" k="U" />
            <Child icon="band" text="基础板带" k="W" last />
            <Group label="其它" open={false} />
            <Group label="自定义" />
            <Child icon="point" text="自定义点" />
            <Child icon="cline" text="自定义线" k="X" selected />
            <Child icon="face" text="自定义面" />
            <Child icon="dimt" text="尺寸标注" k="W" last />
            <div className="flex h-4">
              <span className="ml-[23px] mt-[1px]"><Folder open /></span>
              <span className="ml-[51px] w-[15px] h-[6px] bg-[#5a9ae0]" />
              <span className="w-[22px] h-[6px] bg-[#f5d020]" />
            </div>
          </div>
        </div>
        <div className="w-[16px] bg-[#f0f0f0] flex flex-col items-center justify-between py-[6px] relative">
          <svg className="relative z-10" width="9" height="6" viewBox="0 0 9 6" fill="none">
            <path d="M1 5l3.500-3.500L8 5" stroke="#555" strokeWidth="1.500" />
          </svg>
          <div className="absolute left-0 right-0 top-[216px] h-[245px] bg-[#c8c8c8]" />
          <svg className="relative z-10" width="9" height="6" viewBox="0 0 9 6" fill="none">
            <path d="M1 1l3.500 3.500L8 1" stroke="#555" strokeWidth="1.500" />
          </svg>
        </div>
      </div>
    </div>
    <NavButton label="单构件输入" className="mt-[1px]" />
    <NavButton label="报表预览" className="mt-0" />
  </div>
);

const redLines: [number, number, number, number][] = [
  [178, 607, 905, 168], [192, 617, 925, 168],
  [420, 311, 658, 168],
  [480, 675, 743, 516], [570, 677, 732, 579],
  [817, 673, 1366, 342], [843, 673, 1366, 358], [990, 676, 1366, 450],
  [1040, 674, 1366, 479], [1046, 674, 1366, 483], [1052, 674, 1366, 487], [1030, 676, 1366, 475],
  [1146, 673, 1366, 541], [1323, 673, 1366, 647], [1339, 673, 1366, 657],
  [1180, 303, 1313, 221], [1189, 241, 1308, 168],
  [223, 562, 365, 675], [262, 538, 435, 675], [270, 533, 448, 675],
  [405, 171, 680, 385], [415, 168, 690, 380],
  [485, 168, 720, 350], [556, 168, 760, 325],
  [772, 630, 827, 673], [941, 525, 1126, 673], [896, 565, 1040, 673],
  [1188, 246, 1342, 368], [1187, 250, 1339, 369], [1186, 254, 1336, 371], [1185, 258, 1333, 372],
  [1273, 168, 1366, 240], [1277, 168, 1366, 236], [1281, 168, 1366, 232], [1285, 168, 1366, 228],
  [1273, 190, 1366, 260],
  [590, 486, 780, 636],
];

const Viewport = () => (
  <div className="h-[507px] shrink-0 bg-black overflow-hidden">
    <svg width="1196" height="507" viewBox="170 168 1196 507" className="block" shapeRendering="crispEdges" fill="none">
      <g stroke="#ff0000" strokeWidth="1">
        {redLines.map(([a, b, c, d], i) => (
          <line key={i} x1={a} y1={b} x2={c} y2={d} />
        ))}
      </g>
      {/* grey column on the left */}
      <polygon points="170,168 375,168 380,172 170,301" fill="#e4e4e4" />
      <polygon points="380,172 393,218 450,424 170,595 170,301" fill="#b0b0b0" />
      <polygon points="170,234 190,231 247,215 290,191 318,168 368,168 360,180 320,208 270,236 203,256 177,261 170,261" fill="#00e600" />
      <polygon points="310,215 319,209 298,327 289,333" fill="#00b000" />
      <polygon points="375,168 405,168 393,217" fill="#00b000" />
      <g stroke="#fff" strokeWidth="1">
        <line x1="247" y1="205" x2="247" y2="231" />
        <line x1="170" y1="265" x2="247" y2="218" />
        <line x1="233" y1="206" x2="270" y2="236" />
      </g>
      <polygon points="170,600 265,675 170,675" fill="#e4e4e4" />
      <polygon points="170,620 242,675 208,675 170,650" fill="#999" />
      {/* green behind the box */}
      <polygon points="1097,168 1113,180 1132,168" fill="#00e600" />
      <polygon points="1113,180 1132,168 1255,168 1167,222" fill="#00b000" />
      <polygon points="617,448 642,468 627,554 601,534" fill="#009600" />
      <polygon points="642,468 667,453 722,496 627,554" fill="#00b000" />
      {/* blue C section */}
      <polygon points="626,397 995,168 1097,168 1189,241 763,505" fill="#0073e6" />
      <polygon points="763,505 1189,241 1165,387 737,650" fill="#005cb8" />
      <polygon points="648,438 667,453 642,468" fill="#0060c0" />
      <polygon points="699,607 728,589 724,624" fill="#0073e6" />
      <polygon points="626,397 763,505 737,650 697,619 699,607 724,624 732,578 743,515 648,438 642,468 617,448" fill="#004f9f" />
      {/* grid bubbles */}
      <g stroke="#006400">
        <circle cx="500" cy="180" r="12" />
        <circle cx="1263" cy="181" r="12" />
        <circle cx="864" cy="661" r="12" />
      </g>
      <g fill="#c8c8c8" fontSize="12" textAnchor="middle" fontFamily="'Liberation Sans', sans-serif" shapeRendering="auto">
        <text x="500" y="185">7</text>
        <text x="1263" y="186">8</text>
        <text x="864" y="666">A1</text>
      </g>
      {/* axis triad */}
      <g shapeRendering="auto">
        <path d="M225 625L197 602" stroke="#00e600" strokeWidth="3" />
        <polygon points="190,597 201,599 195,606" fill="#00e600" />
        <path d="M225 625L229 600" stroke="#0a7ce8" strokeWidth="4" />
        <polygon points="230,590 234,602 225,601" fill="#0a7ce8" />
        <path d="M225 625L250 610" stroke="#ff1a1a" strokeWidth="3" />
        <polygon points="259,604 252,614 247,606" fill="#ff1a1a" />
        <path d="M201 592l5 5 4-5M206 597l-1 6" stroke="#00c000" strokeWidth=".8" />
        <path d="M222 588h8l-9 9h8" stroke="#1f8ae8" strokeWidth=".9" />
        <path d="M239 595l7 8M246 595l-7 8" stroke="#e02020" strokeWidth=".8" />
      </g>
    </svg>
  </div>
);

const Cell = ({ children, className }: { children?: React.ReactNode; className?: string }) => (
  <div className={clsx('h-[20px] flex items-center pl-[1px] border border-[#dcdcdc] bg-[#f8f8f8] whitespace-nowrap shrink-0 text-[#111] font-["Liberation_Mono","Noto_Sans_CJK_SC",monospace] text-[11px] tracking-[-.6px]', className)}>
    {children}
  </div>
);

const StatusBar = () => (
  <div className="h-[22px] flex items-end gap-[2px] pl-[1px] shrink-0">
    <Cell className="w-[147px]">X=113761 Y=-12233</Cell>
    <Cell className="w-[78px]"><span className="text-[12px] tracking-normal">层高</span>:2.8m</Cell>
    <Cell className="w-[98px]"><span className="text-[12px] tracking-normal">底标高</span>:20.35m</Cell>
    <Cell className="w-[48px]">1(1)</Cell>
    <Cell className="w-[915px] !text-[12px] !tracking-normal">按鼠标左键指定第一个角点，或拾取构件图元</Cell>
    <Cell className="flex-1">344.9 FPS</Cell>
  </div>
);

const Tile = ({ children, className, under }: { children?: React.ReactNode; className?: string; under?: boolean }) => (
  <div className={clsx('relative h-full flex items-center justify-center shrink-0', className)}>
    {children}
    {under && <span className="absolute bottom-0 left-[2px] right-[2px] h-[2px] bg-[#76b9ed]" />}
  </div>
);

const Taskbar = () => (
  <div className="h-[40px] flex bg-[#030c11] text-white shrink-0 overflow-hidden">
    <Tile className="w-[48px] bg-black">
      <svg width="16" height="16" viewBox="0 0 16 16" fill="#fff">
        <path d="M0 2.500l6.800-1v6H0zM7.600 1.400L16 0v7.500H7.600zM0 8.300h6.800v6.200L0 13.500zM7.600 8.300H16V16l-8.400-1.300z" />
      </svg>
    </Tile>
    <div className="w-[344px] bg-[#333333] flex items-center shrink-0">
      <span className="ml-[11px] w-[19px] h-[19px] rounded-full border-[3px] border-[#e6e6e6]" />
      <span className="ml-[6px] text-[14px] text-[#87939f] whitespace-nowrap">在这里输入你要搜索的内容</span>
      <svg className="ml-[112px]" width="12" height="17" viewBox="0 0 12 17" fill="none">
        <rect x="3" y="1" width="6" height="10" rx="3" stroke="#999" />
        <path d="M1 8c0 6 10 6 10 0M6 13v3M3 16h6" stroke="#999" />
      </svg>
    </div>
    <Tile className="w-[48px]">
      <svg width="21" height="13" viewBox="0 0 21 13" fill="none">
        <rect x="4.500" y=".5" width="12" height="12" stroke="#fff" />
        <path d="M2 2H.5v9H2M19 2h1.500v9H19" stroke="#fff" />
      </svg>
    </Tile>
    <Tile className="w-[50px]">
      <svg width="22" height="22" viewBox="0 0 22 22" fill="#e8e8e8">
        <path d="M11 10C6 11 2 8 2 5s5-4 7-2 3 4 2 7zM12 11c-1-5 2-9 5-9s4 5 2 7-4 3-7 2zM11 12c5-1 9 2 9 5s-5 4-7 2-3-4-2-7zM10 11c1 5-2 9-5 9s-4-5-2-7 4-3 7-2z" />
      </svg>
    </Tile>
    <Tile className="w-[54px]">
      <span className="relative text-[28px] leading-none font-bold font-['Liberation_Sans',sans-serif] text-[#e8e8e8] mt-[-4px]">
        e
        <span className="absolute left-[-5px] top-[9px] w-[26px] h-[11px] rounded-[50%] border-2 border-[#e8e8e8] rotate-[-30deg]" />
      </span>
    </Tile>
    <Tile className="w-[48px]">
      <svg width="20" height="20" viewBox="0 0 20 20" fill="none">
        <path d="M15 4C9 0 2 5 3 11s9 8 13 4 1-9-4-8-5 7-1 7 4-4 1-4" stroke="#cfcfcf" strokeWidth="1.300" />
      </svg>
    </Tile>
    <Tile className="w-[24px]">
      <span className="w-[3px] h-[16px] border-x border-[#3c4a50]" />
    </Tile>
    <Tile className="w-[38px]">
      <span className="text-[32px] leading-none font-bold font-['Liberation_Sans',sans-serif] text-[#0a78d7] mt-[-4px]">e</span>
    </Tile>
    <Tile className="w-[38px]">
      <span className="relative text-[30px] leading-none font-bold font-['Liberation_Sans',sans-serif] text-[#3fa4e8] mt-[-4px]">
        e
        <span className="absolute left-[-6px] top-[9px] w-[29px] h-[12px] rounded-[50%] border-2 border-[#eec93a] rotate-[-30deg]" />
      </span>
    </Tile>
    <Tile className="w-[38px]">
      <svg width="22" height="20" viewBox="0 0 22 20">
        <path d="M1 2h8l2 2h10v15H1z" fill="#f4d36b" />
        <path d="M1 6h20v2H1z" fill="#fff3c4" />
        <path d="M7 12h8v7H7z" fill="#3fa8e0" />
      </svg>
    </Tile>
    <Tile className="w-[38px]" under>
      <span className="w-[21px] h-[21px] rounded-full bg-[#5ab428] border-2 border-[#e8f4e0] flex items-center justify-center text-white text-[14px] font-bold leading-none font-['Liberation_Sans',sans-serif]">e</span>
    </Tile>
    <Tile className="w-[36px]" under>
      <svg width="24" height="24" viewBox="0 0 24 24" fill="none">
        <path d="M19 4C11 0 3 5 3 12s9 11 15 7 3-12-3-11-6 8-2 8 4-4 1-5" stroke="#1a8ae8" strokeWidth="3.200" />
      </svg>
    </Tile>
    <Tile className="w-[36px] bg-[#2d3a40]" under>
      <span className="w-[24px] h-[24px] rounded-[4px] bg-[#0c93ee] flex items-center justify-center">
        <svg width="18" height="18" viewBox="0 0 18 18" fill="none">
          <path d="M9 2v14M2 9h14" stroke="#fff" strokeWidth="2" />
          <circle cx="9" cy="9" r="3" fill="#0c93ee" stroke="#fff" strokeWidth="1.500" />
        </svg>
      </span>
    </Tile>
    <Tile className="w-[36px]" under>
      <svg width="24" height="24" viewBox="0 0 24 24">
        <rect width="24" height="24" rx="2" fill="#f2a420" />
        <path d="M5 5h12v14H5z" fill="#fff4d6" />
        <path d="M7 8h8M7 11h8M7 14h5" stroke="#a08050" />
        <path d="M13 17l9-13 2 2-9 12z" fill="#d8602a" />
      </svg>
    </Tile>
    <div className="ml-[4px] w-[18px] bg-[#ececec] flex flex-col items-center justify-center gap-[15px] shrink-0">
      <svg width="11" height="7" viewBox="0 0 11 7" fill="none"><path d="M1 6l4.500-4.500L10 6" stroke="#555" strokeWidth="1.500" /></svg>
      <svg width="11" height="7" viewBox="0 0 11 7" fill="none"><path d="M1 1l4.500 4.500L10 1" stroke="#555" strokeWidth="1.500" /></svg>
    </div>
    <Tile className="w-[25px]">
      <span className="w-[3px] h-[16px] border-x border-[#3c4a50]" />
    </Tile>
    <Tile className="w-[27px] justify-start">
      <span className="text-[12px] text-[#b4b4b4] whitespace-nowrap">链接</span>
    </Tile>
    <div className="w-[70px] ml-[6px] flex flex-col items-center justify-center text-[12px] leading-[18px] text-[#dcdcdc] shrink-0 font-['Noto_Sans','Noto_Sans_CJK_SC',sans-serif]">
      <span>33%</span>
      <span className="whitespace-nowrap">CPU使用</span>
    </div>
    <Tile className="w-[24px] ml-[4px]">
      <svg width="13" height="8" viewBox="0 0 13 8" fill="none"><path d="M1 7l5.500-5.500L12 7" stroke="#e8e8e8" strokeWidth="1.300" /></svg>
    </Tile>
    <Tile className="w-[24px]">
      <svg width="14" height="15" viewBox="0 0 14 15" fill="#f4f4f4">
        <path d="M1 12c2-1 1-4 2-7s7-4 8 0 0 6 2 7z" /><path d="M5 13h4l-2 2z" />
      </svg>
    </Tile>
    <Tile className="w-[24px]">
      <svg width="16" height="11" viewBox="0 0 16 11" fill="none">
        <rect x="4.500" y="2.500" width="11" height="7" stroke="#f0f0f0" />
        <rect x="6" y="4" width="7" height="4" fill="#f0f0f0" />
        <path d="M0 6h4M2 1v3" stroke="#f0f0f0" strokeWidth="1.400" />
      </svg>
    </Tile>
    <Tile className="w-[24px]">
      <svg width="14" height="13" viewBox="0 0 14 13" fill="none">
        <path d="M1 8a8 8 0 0 1 9-5M1 11a5 5 0 0 1 6-5M12 1a12 12 0 0 0-11 5" stroke="#a8a8a8" />
        <circle cx="11" cy="11" r="1.500" fill="#f0f0f0" />
      </svg>
    </Tile>
    <Tile className="w-[22px]">
      <svg width="15" height="13" viewBox="0 0 15 13" fill="none">
        <path d="M1 4.500h3L7.500 1.500v10L4 8.500H1z" stroke="#e8e8e8" />
        <path d="M10 4c1 1 1 4 0 5M12.500 2c2 2 2 7 0 9" stroke="#b0b0b0" />
      </svg>
    </Tile>
    <Tile className="w-[32px]">
      <svg width="23" height="13" viewBox="0 0 23 13" fill="none">
        <rect x=".5" y=".5" width="22" height="12" rx="1" stroke="#f0f0f0" />
        <path d="M3 4h17M3 6.500h17" stroke="#f0f0f0" strokeDasharray="1 1" />
        <path d="M6 9.500h11" stroke="#f0f0f0" />
      </svg>
    </Tile>
    <Tile className="w-[26px]">
      <span className="text-[19px] leading-none text-[#f4f4f4] font-['Liberation_Sans',sans-serif]">A</span>
    </Tile>
    <Tile className="w-[30px]">
      <span className="w-[16px] h-[16px] rounded-[3px] bg-[#f0562a] flex items-center justify-center text-white text-[13px] font-bold leading-none font-['Liberation_Sans',sans-serif]">S</span>
    </Tile>
    <div className="w-[68px] flex flex-col items-center justify-center leading-[19px] text-[13px] text-[#dcdcdc] shrink-0 font-['Noto_Sans',sans-serif]">
      <span>10:50</span>
      <span>2018/8/4</span>
    </div>
    <Tile className="w-[58px] bg-black">
      <span className="relative">
        <svg width="16" height="15" viewBox="0 0 16 15" className="block">
          <path d="M0 0h16v11H7l-3 3v-3H0z" fill="#f4f4f4" />
          <path d="M3 3h10M3 6h10M3 9h7" stroke="#222" />
        </svg>
        <span className="absolute left-[8px] top-[6px] w-[16px] h-[16px] rounded-full bg-[#3a3a3a] border border-[#777] flex items-center justify-center text-[11px] font-bold leading-none font-['Liberation_Sans',sans-serif]">1</span>
      </span>
    </Tile>
  </div>
);

export default function App() {
  return (
    <div className="w-[1366px] h-[768px] flex flex-col overflow-hidden bg-[#f0f0f0] text-[12px] leading-4 text-[#111] font-['Noto_Sans_CJK_SC','Noto_Sans',sans-serif]">
      <TitleBar />
      <InfoRow />
      <ToolRow1 />
      <div className="flex h-[622px] shrink-0">
        <Sidebar />
        <div className="flex-1 min-w-0 flex flex-col">
          <ToolRow2 />
          <ToolRow3 />
          <ToolRow4 />
          <Viewport />
          <ToolBottom />
        </div>
      </div>
      <StatusBar />
      <Taskbar />
    </div>
  );
}
